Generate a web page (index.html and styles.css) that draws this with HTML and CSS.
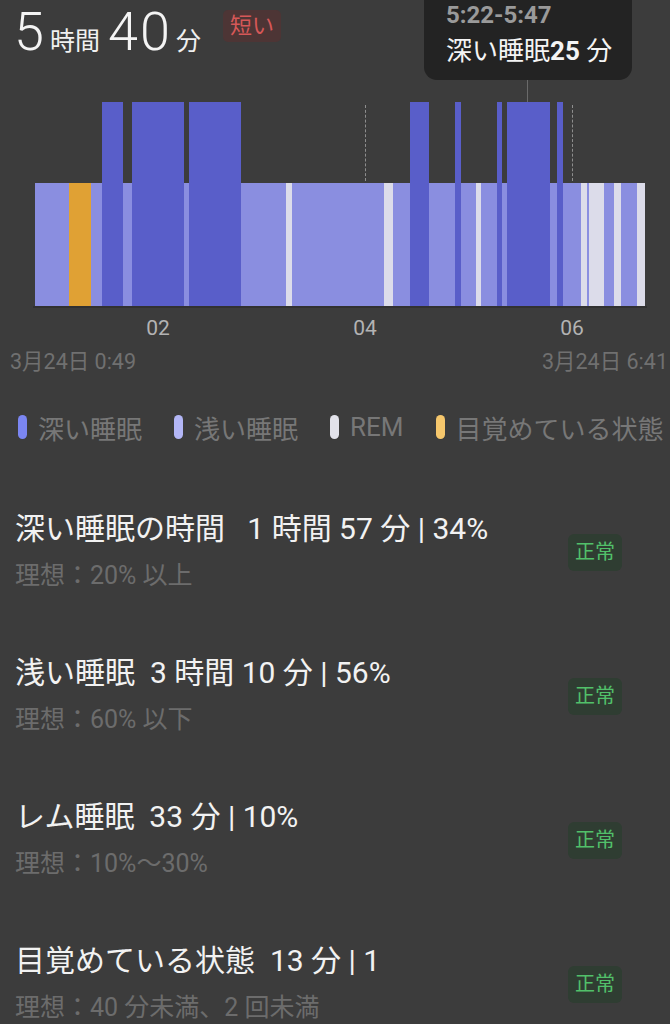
FILE: index.html
```html
<!DOCTYPE html>
<html lang="ja">
<head>
<meta charset="utf-8">
<title>睡眠</title>
<link rel="stylesheet" href="styles.css">
</head>
<body>
<div class="page">
  <header class="summary">
    <span class="big">5</span><span class="unit">時間</span><span class="big">40</span><span class="unit unit-min">分</span>
    <span class="tag-short">短い</span>
  </header>

  <div class="tooltip">
    <div class="tip-time">5:22-5:47</div>
    <div class="tip-text">深い睡眠<b>25</b> 分</div>
  </div>

  <section class="chart">
    <div class="pointer"></div>
    <div class="dash dash-a"></div>
    <div class="dash dash-b"></div>
    <div class="bars">
      <div class="seg light" style="width:34px"></div>
      <div class="seg awake" style="width:22px"></div>
      <div class="seg light" style="width:11px"></div>
      <div class="seg deep" style="width:21px"></div>
      <div class="seg light" style="width:9px"></div>
      <div class="seg deep" style="width:52px"></div>
      <div class="seg light" style="width:5px"></div>
      <div class="seg deep" style="width:52px"></div>
      <div class="seg light" style="width:45px"></div>
      <div class="seg rem" style="width:6px"></div>
      <div class="seg light" style="width:92px"></div>
      <div class="seg rem" style="width:9px"></div>
      <div class="seg light" style="width:17px"></div>
      <div class="seg deep" style="width:19px"></div>
      <div class="seg light" style="width:26px"></div>
      <div class="seg deep" style="width:6px"></div>
      <div class="seg light" style="width:15px"></div>
      <div class="seg rem" style="width:5px"></div>
      <div class="seg light" style="width:16px"></div>
      <div class="seg deep" style="width:5px"></div>
      <div class="seg light" style="width:5px"></div>
      <div class="seg deep" style="width:43px"></div>
      <div class="seg light" style="width:7px"></div>
      <div class="seg deep" style="width:6px"></div>
      <div class="seg light" style="width:18px"></div>
      <div class="seg rem" style="width:6px"></div>
      <div class="seg light" style="width:2px"></div>
      <div class="seg rem" style="width:15px"></div>
      <div class="seg light" style="width:10px"></div>
      <div class="seg rem" style="width:7px"></div>
      <div class="seg light" style="width:16px"></div>
      <div class="seg rem" style="width:8px"></div>
    </div>
  </section>

  <div class="axis">
    <span class="tick">02</span>
    <span class="tick">04</span>
    <span class="tick">06</span>
  </div>

  <div class="range">
    <span>3月24日 0:49</span>
    <span>3月24日 6:41</span>
  </div>

  <ul class="legend">
    <li><i class="pill pill-deep"></i>深い睡眠</li>
    <li><i class="pill pill-light"></i>浅い睡眠</li>
    <li><i class="pill pill-rem"></i>REM</li>
    <li><i class="pill pill-awake"></i>目覚めている状態</li>
  </ul>

  <section class="stats">
    <div class="stat">
      <div class="stat-text">
        <div class="stat-title">深い睡眠の時間&nbsp;&nbsp; 1 時間 57 分 | 34%</div>
        <div class="stat-ideal">理想：20% 以上</div>
      </div>
      <span class="tag-ok">正常</span>
    </div>
    <div class="stat">
      <div class="stat-text">
        <div class="stat-title">浅い睡眠&nbsp; 3 時間 10 分 | 56%</div>
        <div class="stat-ideal">理想：60% 以下</div>
      </div>
      <span class="tag-ok">正常</span>
    </div>
    <div class="stat">
      <div class="stat-text">
        <div class="stat-title">レム睡眠&nbsp; 33 分 | 10%</div>
        <div class="stat-ideal">理想：10%～30%</div>
      </div>
      <span class="tag-ok">正常</span>
    </div>
    <div class="stat">
      <div class="stat-text">
        <div class="stat-title">目覚めている状態&nbsp; 13 分 | 1</div>
        <div class="stat-ideal">理想：40 分未満、2 回未満</div>
      </div>
      <span class="tag-ok">正常</span>
    </div>
  </section>
</div>
</body>
</html>
```

FILE: styles.css
```css
* { box-sizing: border-box; }

html, body {
  margin: 0;
  padding: 0;
  background: #3c3c3c;
}

body {
  font-family: Roboto, "Noto Sans CJK JP", sans-serif;
  color: #f2f2f2;
  overflow: hidden;
}

.page {
  position: relative;
  width: 670px;
  height: 1024px;
  overflow: hidden;
}

/* Header */
.summary {
  display: flex;
  align-items: baseline;
  padding-left: 14px;
  height: 60px;
}

.big {
  font-size: 54px;
  line-height: normal;
  font-weight: 300;
  letter-spacing: 2px;
  color: #f4f4f4;
}

.unit {
  font-size: 25px;
  line-height: normal;
  margin-left: 4px;
  margin-right: 8px;
  color: #f0f0f0;
}

.unit-min {
  margin-left: 4px;
  margin-right: 0;
}

.tag-short {
  align-self: flex-start;
  margin-top: 10px;
  margin-left: 22px;
  height: 32px;
  line-height: 32px;
  padding: 0 7px;
  font-size: 22px;
  color: #d65858;
  background: #4d3535;
  border-radius: 5px;
}

/* Tooltip */
.tooltip {
  position: absolute;
  left: 424px;
  top: -20px;
  width: 208px;
  height: 100px;
  padding: 19px 0 0 22px;
  background: #232323;
  border-radius: 13px;
  z-index: 2;
}

.tip-time {
  font-size: 24px;
  font-weight: 700;
  line-height: 32px;
  color: #9a9a9a;
}

.tip-text {
  font-size: 26px;
  line-height: 36px;
  color: #f4f4f4;
  margin-top: 2px;
}

.tip-text b {
  font-weight: 700;
}

/* Chart */
.chart {
  position: relative;
  margin-top: 42px;
  margin-left: 33px;
  width: 614px;
  border-bottom: 2px solid #313131;
}

.bars {
  display: flex;
  align-items: flex-end;
  height: 204px;
  margin-left: 2px;
}

.seg {
  flex: none;
  height: 123px;
}

.seg.deep { height: 204px; background: #595ec9; }
.seg.light { background: #8a8ee0; }
.seg.rem { background: #dcdcea; }
.seg.awake { background: #e0a134; }

.pointer {
  position: absolute;
  left: 494px;
  top: -22px;
  width: 1px;
  height: 22px;
  background: #6a6a6a;
}

.dash {
  position: absolute;
  top: 3px;
  width: 0;
  height: 76px;
  border-left: 1px dashed #8e8e8e;
}

.dash-a { left: 332px; }
.dash-b { left: 539px; }

/* Axis */
.axis {
  display: flex;
  gap: 147px;
  padding-left: 128px;
  margin-top: 8px;
}

.tick {
  width: 60px;
  text-align: center;
  font-size: 21px;
  line-height: 24px;
  color: #b3b3b3;
}

.range {
  display: flex;
  justify-content: space-between;
  padding: 0 2px 0 10px;
  margin-top: 10px;
  font-size: 21.5px;
  line-height: 24px;
  color: #707070;
}

/* Legend */
.legend {
  list-style: none;
  display: flex;
  gap: 32px;
  margin: 39px 0 0 0;
  padding: 0 0 0 18px;
}

.legend li {
  display: flex;
  align-items: center;
  gap: 11px;
  height: 28px;
  font-size: 26px;
  color: #777777;
  white-space: nowrap;
}

.pill {
  display: block;
  width: 9px;
  height: 24px;
  border-radius: 5px;
}

.pill-deep { background: #7b86f2; }
.pill-light { background: #b3b6f6; }
.pill-rem { background: #e2e2ea; }
.pill-awake { background: #f6c76c; }

/* Stats */
.stats {
  margin-top: 38px;
  padding: 0 48px 0 15px;
}

.stat {
  display: flex;
  align-items: center;
  justify-content: space-between;
  height: 144px;
}

.stat-title {
  font-size: 30px;
  line-height: 36px;
  color: #f2f2f2;
  white-space: nowrap;
}

.stat-ideal {
  margin-top: 14px;
  font-size: 25px;
  line-height: 30px;
  color: #6c6c6c;
}

.tag-ok {
  height: 37px;
  line-height: 37px;
  padding: 0 7px;
  font-size: 20px;
  color: #52c06a;
  background: #2f3d32;
  border-radius: 6px;
  margin-top: 2px;
}
```
